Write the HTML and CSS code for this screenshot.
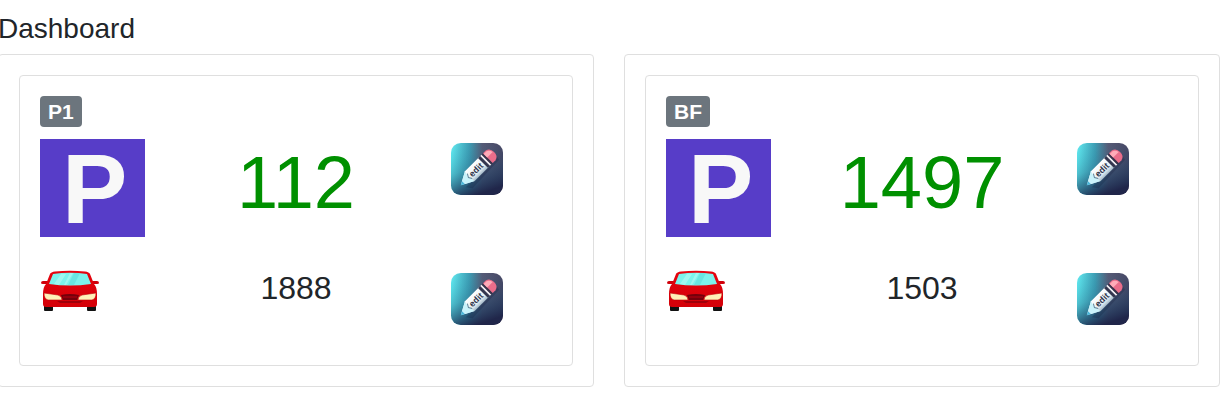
FILE: index.html
```html
<!doctype html>
<html lang="en">
<head>
    <meta charset="UTF-8">
    <title>Dashboard</title>
    <link rel="stylesheet" href="styles.css">
</head>
<body>
<main class="page">
    <h3 class="title">Dashboard</h3>
    <div class="row">
        <section class="card">
            <div class="card">
                <span class="badge">P1</span>
                <div class="counts">
                    <svg class="icon-parking" viewBox="0 0 105 98" role="img" aria-label="Free places">
                        <rect width="105" height="98" fill="#573dc8"/>
                        <text class="parking-letter" x="22" y="84">P</text>
                    </svg>
                    <span class="free">112</span>
                    <button class="edit" type="button" aria-label="Edit free places of P1">
                        <svg viewBox="0 0 53 53"><use href="#edit"/><text class="pencil-word" transform="translate(10 43) rotate(-45)" x="14" y="3">edit</text></svg>
                    </button>
                    <svg class="icon-car" role="img" aria-label="Capacity"><use href="#car"/></svg>
                    <span class="total">1888</span>
                    <button class="edit" type="button" aria-label="Edit capacity of P1">
                        <svg viewBox="0 0 53 53"><use href="#edit"/><text class="pencil-word" transform="translate(10 43) rotate(-45)" x="14" y="3">edit</text></svg>
                    </button>
                </div>
            </div>
        </section>
        <section class="card">
            <div class="card">
                <span class="badge">BF</span>
                <div class="counts">
                    <svg class="icon-parking" viewBox="0 0 105 98" role="img" aria-label="Free places">
                        <rect width="105" height="98" fill="#573dc8"/>
                        <text class="parking-letter" x="22" y="84">P</text>
                    </svg>
                    <span class="free">1497</span>
                    <button class="edit" type="button" aria-label="Edit free places of BF">
                        <svg viewBox="0 0 53 53"><use href="#edit"/><text class="pencil-word" transform="translate(10 43) rotate(-45)" x="14" y="3">edit</text></svg>
                    </button>
                    <svg class="icon-car" role="img" aria-label="Capacity"><use href="#car"/></svg>
                    <span class="total">1503</span>
                    <button class="edit" type="button" aria-label="Edit capacity of BF">
                        <svg viewBox="0 0 53 53"><use href="#edit"/><text class="pencil-word" transform="translate(10 43) rotate(-45)" x="14" y="3">edit</text></svg>
                    </button>
                </div>
            </div>
        </section>
    </div>
</main>

<svg class="sprite" aria-hidden="true">
    <defs>
        <linearGradient id="editTop" x1="0" y1="0" x2="1" y2="0">
            <stop offset="0" stop-color="#62eaf0"/>
            <stop offset="0.35" stop-color="#3f9db4"/>
            <stop offset="0.6" stop-color="#5c5672"/>
            <stop offset="1" stop-color="#503d5a"/>
        </linearGradient>
        <linearGradient id="editShade" x1="0.15" y1="0" x2="0.5" y2="1">
            <stop offset="0" stop-color="#16a0b8" stop-opacity="0"/>
            <stop offset="0.5" stop-color="#1c5a7c" stop-opacity="0.3"/>
            <stop offset="1" stop-color="#20264a"/>
        </linearGradient>
        <linearGradient id="pencilBody" x1="0" y1="0" x2="0" y2="1">
            <stop offset="0" stop-color="#ffffff"/>
            <stop offset="0.7" stop-color="#e6f0f5"/>
            <stop offset="1" stop-color="#a3b8c8"/>
        </linearGradient>
        <linearGradient id="carBody" x1="0" y1="0" x2="0" y2="1">
            <stop offset="0" stop-color="#e6040f"/>
            <stop offset="1" stop-color="#d30008"/>
        </linearGradient>
    </defs>
    <symbol id="car" viewBox="0 0 60 42">
        <rect x="4" y="33" width="9" height="9" rx="1" fill="#111"/>
        <rect x="47" y="33" width="9" height="9" rx="1" fill="#111"/>
        <path d="M1 14q0-2 2-2h6v3H3q-2 0-2-1zM59 14q0-2-2-2h-6v3h6q2 0 2-1z" fill="#d0000a"/>
        <path d="M10 5Q11 3 15 2.500Q30 1 45 2.500Q49 3 50 5L54 15Q57 18 57 25V35Q57 38 54 38H6Q3 38 3 35V25Q3 18 6 15Z" fill="url(#carBody)"/>
        <path d="M13 5Q30 2.500 47 5L51 15Q30 18 9 15Z" fill="#7cf3ec"/>
        <path d="M21 5h5l-7 11-5-1zM30 4h3l-7 12h-2z" fill="#b6faf5" opacity="0.6"/>
        <path d="M34 4h6l-6 12h-6z" fill="#5ddeda" opacity="0.6"/>
        <path d="M21 26Q30 24 39 26L37 31H23Z" fill="#74000b"/>
        <path d="M23 28h14" stroke="#b80010"/>
        <path d="M4 24l14 2q4 1 4 5H8q-4-1-4-7zM56 24l-14 2q-4 1-4 5h14q4-1 4-7z" fill="#fff1b8" stroke="#bd0008" stroke-width="0.6"/>
        <path d="M17 32h26l-3 2H20z" fill="#9d000a"/>
    </symbol>
    <symbol id="edit" viewBox="0 0 53 53">
        <rect width="53" height="53" rx="10" fill="url(#editTop)"/>
        <rect width="53" height="53" rx="10" fill="url(#editShade)"/>
        <path d="M15 45l32-31 2 3-27 29z" fill="#141936" opacity="0.25"/>
        <g transform="translate(10 43) rotate(-45)">
            <path d="M0 0L13-7H34V7H13Z" fill="url(#pencilBody)"/>
            <path d="M0 0L4-2.200V2.200Z" fill="#48b8dc"/>
            <path d="M4-2.200L13-7L11 0L13 7L4 2.200Z" fill="#c9f3fb"/>
            <path d="M13-3.500L11 0L13 3.500" fill="none" stroke="#5d8298"/>
            <path d="M32-7h3V7h-3z" fill="#34364f"/>
            <path d="M35-7h2V7h-2z" fill="#f3eef2"/>
            <path d="M37-7h2V7h-2z" fill="#3a3149"/>
            <path d="M39-7H43q5 1 5 7t-5 7h-4z" fill="#ea6d8a"/>
            <path d="M39-6h4q3 1 4 5h-8z" fill="#ffabb8"/>
        </g>
    </symbol>
</svg>
</body>
</html>
```
FILE: styles.css
```css
*{
    box-sizing: border-box;
}
body{
    margin: 0;
    background: #fff;
    color: #212529;
    font-family: "Liberation Sans", Arial, sans-serif;
}
.sprite{
    display: block;
    width: 0;
    height: 0;
}
.page{
    margin: 0 8px 0 -2px;
    padding: 12px 0 16px;
}
.title{
    margin: 0 0 8px;
    font-size: 28px;
    font-weight: 400;
    line-height: 34px;
}
.row{
    display: grid;
    grid-template-columns: 1fr 1fr;
    gap: 30px;
}
.card{
    padding: 20px;
    border: 1px solid #dfdfdf;
    border-radius: 4px;
}
.badge{
    display: inline-block;
    padding: 5px 8px;
    border-radius: 4px;
    background: #6c757d;
    color: #fff;
    font-size: 21px;
    font-weight: 700;
    line-height: 21px;
    vertical-align: top;
}
.counts{
    display: grid;
    grid-template-columns: repeat(3, minmax(0, 1fr));
    row-gap: 32px;
    align-items: start;
    margin: 12px -15px 0;
    padding-bottom: 20px;
    text-align: center;
}
.icon-parking{
    width: 105px;
    height: 98px;
    margin-left: 15px;
    overflow: visible;
}
.icon-car{
    width: 60px;
    height: 42px;
    margin-left: 15px;
}
.parking-letter{
    fill: #f8f8f8;
    font-size: 98px;
    font-weight: 700;
}
.pencil-word{
    fill: #30344a;
    font-size: 9px;
    font-weight: 700;
}
.free{
    color: #009000;
    font-size: 74px;
    line-height: 88px;
}
.total{
    font-size: 32px;
    line-height: 38px;
}
.edit{
    justify-self: center;
    padding: 4px 0 0;
    border: 0;
    background: none;
    cursor: pointer;
}
.edit svg{
    display: block;
    width: 52px;
    height: 52px;
}
```
